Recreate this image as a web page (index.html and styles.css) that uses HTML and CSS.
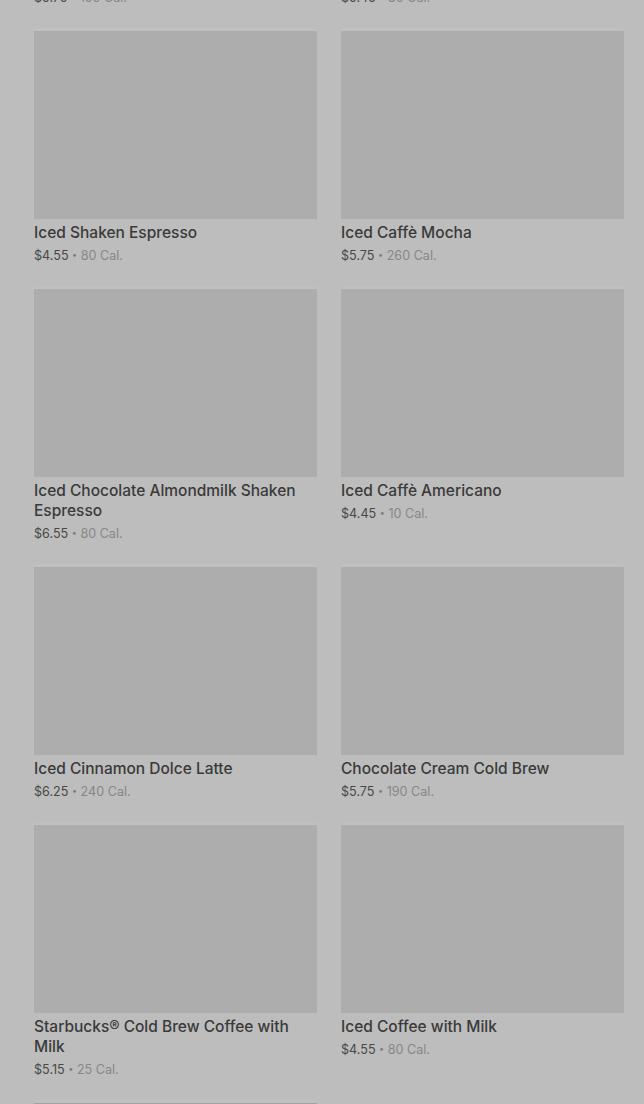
FILE: index.html
```html
<!DOCTYPE html>
<html lang="en">
<head>
    <meta charset="UTF-8">
    <meta name="viewport" content="width=device-width, initial-scale=1.0">
    <title>Cold Coffees</title>
    <link rel="stylesheet" href="styles.css">
</head>
<body>
    <div class="menu-grid">
        <div class="product">
            <div class="product-img"></div>
            <h3>Iced Caramel Macchiato</h3>
            <p class="meta">$5.75 <span class="dot">•</span> <span class="cal">150 Cal.</span></p>
        </div>
        <div class="product">
            <div class="product-img"></div>
            <h3>Iced Flat White</h3>
            <p class="meta">$5.45 <span class="dot">•</span> <span class="cal">80 Cal.</span></p>
        </div>

        <div class="product">
            <div class="product-img"></div>
            <h3>Iced Shaken Espresso</h3>
            <p class="meta">$4.55 <span class="dot">•</span> <span class="cal">80 Cal.</span></p>
        </div>
        <div class="product">
            <div class="product-img"></div>
            <h3>Iced Caffè Mocha</h3>
            <p class="meta">$5.75 <span class="dot">•</span> <span class="cal">260 Cal.</span></p>
        </div>

        <div class="product">
            <div class="product-img"></div>
            <h3>Iced Chocolate Almondmilk Shaken Espresso</h3>
            <p class="meta">$6.55 <span class="dot">•</span> <span class="cal">80 Cal.</span></p>
        </div>
        <div class="product">
            <div class="product-img"></div>
            <h3>Iced Caffè Americano</h3>
            <p class="meta">$4.45 <span class="dot">•</span> <span class="cal">10 Cal.</span></p>
        </div>

        <div class="product">
            <div class="product-img"></div>
            <h3>Iced Cinnamon Dolce Latte</h3>
            <p class="meta">$6.25 <span class="dot">•</span> <span class="cal">240 Cal.</span></p>
        </div>
        <div class="product">
            <div class="product-img"></div>
            <h3>Chocolate Cream Cold Brew</h3>
            <p class="meta">$5.75 <span class="dot">•</span> <span class="cal">190 Cal.</span></p>
        </div>

        <div class="product">
            <div class="product-img"></div>
            <h3>Starbucks® Cold Brew Coffee with Milk</h3>
            <p class="meta">$5.15 <span class="dot">•</span> <span class="cal">25 Cal.</span></p>
        </div>
        <div class="product">
            <div class="product-img"></div>
            <h3>Iced Coffee with Milk</h3>
            <p class="meta">$4.55 <span class="dot">•</span> <span class="cal">80 Cal.</span></p>
        </div>

        <div class="product">
            <div class="product-img last"></div>
        </div>
    </div>
</body>
</html>
```

FILE: styles.css
```css
* {
    margin: 0;
    padding: 0;
    box-sizing: border-box;
}

body {
    font-family: 'Inter', 'Noto Sans', sans-serif;
    background-color: #bdbdbd;
    color: #3b3b3b;
    height: 1104px;
    overflow: hidden;
}

.menu-grid {
    display: grid;
    grid-template-columns: 283px 283px;
    column-gap: 24px;
    row-gap: 24px;
    padding: 0 20px 0 34px;
    margin-top: -227px;
}

.product-img {
    height: 188px;
    background-color: #adadad;
    box-shadow: 0 -3px 3px rgba(255, 255, 255, 0.06);
}

.product-img.last {
    border-top: 1px solid #a2a2a2;
}

.product h3 {
    margin-top: 4px;
    font-size: 15.5px;
    line-height: 20px;
    font-weight: 500;
    color: #3a3a3a;
}

.meta {
    margin-top: 3px;
    height: 19px;
    font-size: 12.6px;
    line-height: 20px;
    color: #484848;
}

.dot {
    font-size: 9px;
    line-height: 10px;
    vertical-align: 2px;
    color: #7e7e7e;
}

.cal {
    color: #878787;
}
```
